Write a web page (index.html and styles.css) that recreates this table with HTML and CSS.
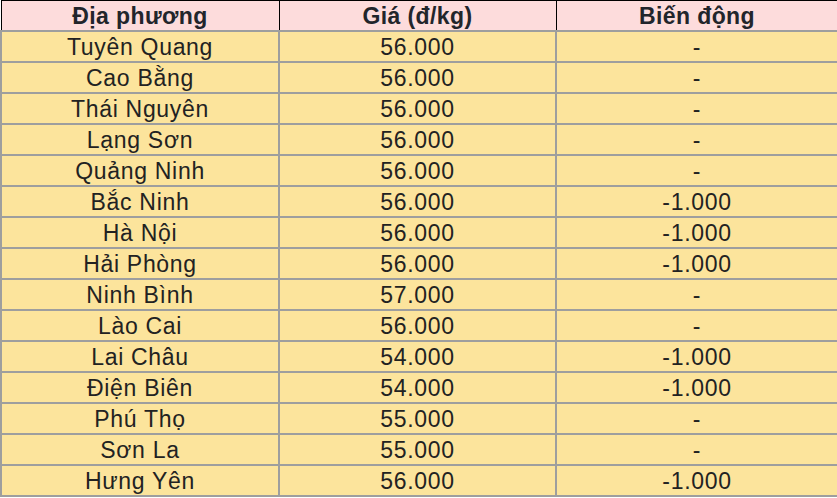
FILE: index.html
```html
<!DOCTYPE html>
<html lang="vi">
<head>
<meta charset="utf-8">
<title>Giá heo hơi</title>
<link rel="stylesheet" href="styles.css">
</head>
<body>
<table class="price-table">
  <colgroup>
    <col class="c1">
    <col class="c2">
    <col class="c3">
  </colgroup>
  <thead>
    <tr><th>Địa phương</th><th>Giá (đ/kg)</th><th>Biến động</th></tr>
  </thead>
  <tbody>
    <tr><td>Tuyên Quang</td><td>56.000</td><td>-</td></tr>
    <tr><td>Cao Bằng</td><td>56.000</td><td>-</td></tr>
    <tr><td>Thái Nguyên</td><td>56.000</td><td>-</td></tr>
    <tr><td>Lạng Sơn</td><td>56.000</td><td>-</td></tr>
    <tr><td>Quảng Ninh</td><td>56.000</td><td>-</td></tr>
    <tr><td>Bắc Ninh</td><td>56.000</td><td>-1.000</td></tr>
    <tr><td>Hà Nội</td><td>56.000</td><td>-1.000</td></tr>
    <tr><td>Hải Phòng</td><td>56.000</td><td>-1.000</td></tr>
    <tr><td>Ninh Bình</td><td>57.000</td><td>-</td></tr>
    <tr><td>Lào Cai</td><td>56.000</td><td>-</td></tr>
    <tr><td>Lai Châu</td><td>54.000</td><td>-1.000</td></tr>
    <tr><td>Điện Biên</td><td>54.000</td><td>-1.000</td></tr>
    <tr><td>Phú Thọ</td><td>55.000</td><td>-</td></tr>
    <tr><td>Sơn La</td><td>55.000</td><td>-</td></tr>
    <tr><td>Hưng Yên</td><td>56.000</td><td>-1.000</td></tr>
  </tbody>
</table>
</body>
</html>
```

FILE: styles.css
```css
html, body {
  margin: 0;
  padding: 0;
  background: #ffffff;
}

.price-table {
  width: 837px;
  border-collapse: collapse;
  table-layout: fixed;
  font-family: "Liberation Sans", Arial, sans-serif;
  font-size: 23px;
  color: #222222;
}

.c1 { width: 278px; }
.c2 { width: 277px; }
.c3 { width: 282px; }

.price-table th {
  background: #fddcdc;
  font-weight: bold;
  color: #22252b;
  height: 28px;
  padding: 1px 0 0 0;
  line-height: 26px;
  text-align: center;
  vertical-align: middle;
  letter-spacing: 0.4px;
  border-top: 1px solid #000000;
  border-left: 1px solid #000000;
  border-right: 1px solid #000000;
  border-bottom: 2px solid #9e9e9e;
}

.price-table td {
  background: #fce49c;
  height: 29px;
  padding: 0;
  line-height: 26px;
  text-align: center;
  vertical-align: middle;
  border: 2px solid #9e9e9e;
  letter-spacing: 0.7px;
}
```
